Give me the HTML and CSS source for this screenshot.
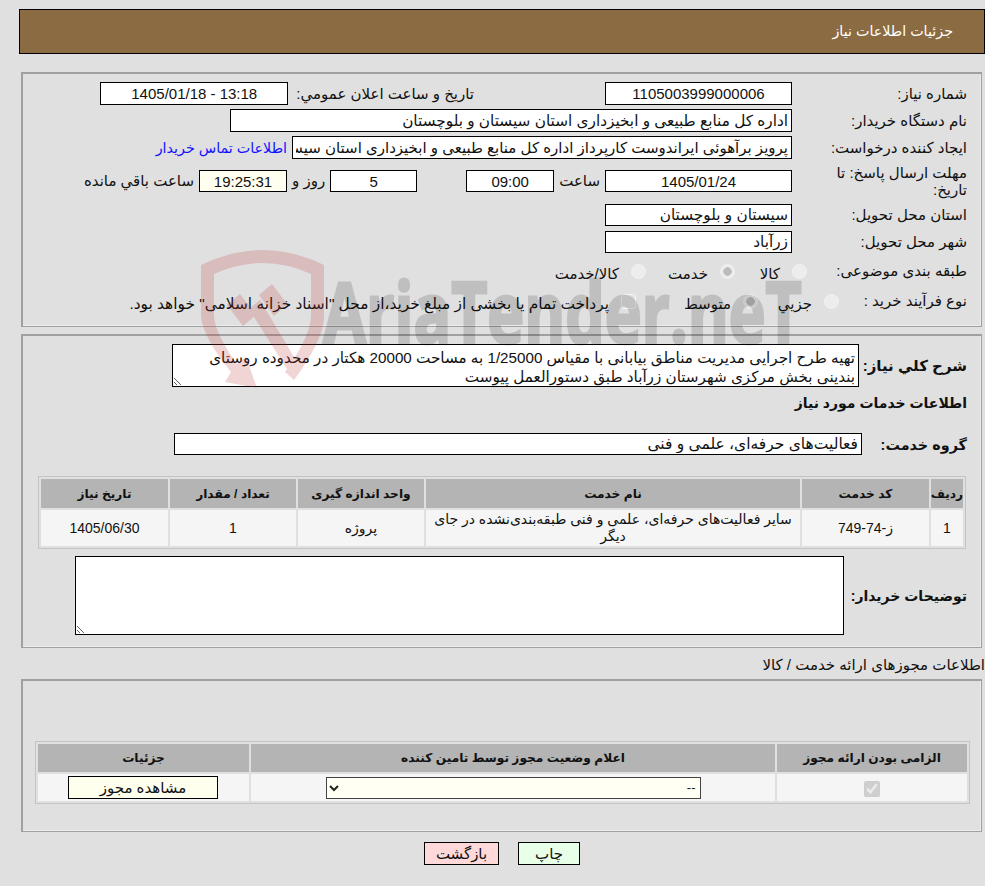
FILE: index.html
```html
<!DOCTYPE html>
<html lang="fa" dir="rtl">
<head>
<meta charset="utf-8">
<title>جزئیات اطلاعات نیاز</title>
<link rel="stylesheet" href="styles.css">
</head>
<body>
<header class="title-bar">جزئیات اطلاعات نیاز</header>

<section class="panel panel-main">
  <div class="row">
    <label class="label">شماره نیاز:</label>
    <input class="field w-186 center" value="1105003999000006" readonly>
    <span class="text gap-131">تاریخ و ساعت اعلان عمومي:</span>
    <input class="field w-187 center ltr gap-3" value="1405/01/18 - 13:18" readonly>
  </div>
  <div class="row">
    <label class="label">نام دستگاه خریدار:</label>
    <input class="field w-561" value="اداره کل منابع طبیعی و ابخیزداری استان سیستان و بلوچستان" readonly>
  </div>
  <div class="row">
    <label class="label">ایجاد کننده درخواست:</label>
    <input class="field w-499 narrow-fa" value="پرویز برآهوئی ایراندوست کارپرداز اداره کل منابع طبیعی و ابخیزداری استان سیستان و بلوچستان" readonly>
    <a class="link" href="#">اطلاعات تماس خریدار</a>
  </div>
  <div class="row row-deadline">
    <label class="label label-wrap">مهلت ارسال پاسخ: تا تاریخ:</label>
    <input class="field short w-186 center ltr" value="1405/01/24" readonly>
    <span class="text">ساعت</span>
    <input class="field short w-87 center" value="09:00" readonly>
    <input class="field short w-86 center gap-49" value="5" readonly>
    <span class="text">روز و</span>
    <input class="field short w-87 center tint" value="19:25:31" readonly>
    <span class="text">ساعت باقي مانده</span>
  </div>
  <div class="row">
    <label class="label">استان محل تحویل:</label>
    <input class="field short w-186" value="سیستان و بلوچستان" readonly>
  </div>
  <div class="row">
    <label class="label">شهر محل تحویل:</label>
    <input class="field short w-186" value="زرآباد" readonly>
  </div>
  <div class="row row-choice row-first-choice">
    <label class="label">طبقه بندی موضوعی:</label>
    <div class="choices first">
      <span class="choice c-goods"><input type="radio" class="radio" disabled><span>کالا</span></span>
      <span class="choice c-service"><input type="radio" class="radio" checked disabled><span>خدمت</span></span>
      <span class="choice"><input type="radio" class="radio" disabled><span>کالا/خدمت</span></span>
    </div>
  </div>
  <div class="row row-choice">
    <label class="label">نوع فرآیند خرید :</label>
    <div class="choices second">
      <span class="choice c-small"><input type="radio" class="radio" disabled><span>جزیي</span></span>
      <span class="choice c-mid"><input type="radio" class="radio" checked disabled><span>متوسط</span></span>
      <span class="choice treasury"><input type="checkbox" class="box" disabled><span>پرداخت تمام یا بخشی از مبلغ خرید،از محل "اسناد خزانه اسلامی" خواهد بود.</span></span>
    </div>
  </div>
</section>

<section class="panel panel-need">
  <div class="row-desc">
    <label class="label-strong l-desc">شرح کلي نیاز:</label>
    <textarea class="area area-desc" readonly>تهیه طرح اجرایی مدیریت مناطق بیابانی با مقیاس 1/25000 به مساحت 20000 هکتار در محدوده روستای بندینی بخش مرکزی شهرستان زرآباد طبق دستورالعمل پیوست</textarea>
  </div>
  <h2 class="heading">اطلاعات خدمات مورد نیاز</h2>
  <div class="row-group">
    <label class="label-strong l-group">گروه خدمت:</label>
    <input class="field short w-687 wide-fa" value="فعالیت‌های حرفه‌ای، علمی و فنی" readonly>
  </div>
  <table class="grid grid-services">
    <colgroup><col class="c1"><col class="c2"><col class="c3"><col class="c4"><col class="c5"><col class="c6"></colgroup>
    <thead>
      <tr><th>ردیف</th><th>کد خدمت</th><th>نام خدمت</th><th>واحد اندازه گیری</th><th>تعداد / مقدار</th><th>تاریخ نیاز</th></tr>
    </thead>
    <tbody>
      <tr><td>1</td><td>ز-74-749</td><td>سایر فعالیت‌های حرفه‌ای، علمی و فنی طبقه‌بندی‌نشده در جای دیگر</td><td>پروژه</td><td>1</td><td>1405/06/30</td></tr>
    </tbody>
  </table>
  <div class="row-notes">
    <label class="label-strong l-notes">توضیحات خریدار:</label>
    <textarea class="area area-notes" readonly></textarea>
  </div>
</section>

<p class="license-title">اطلاعات مجوزهای ارائه خدمت / کالا</p>

<section class="panel panel-license">
  <table class="grid grid-license">
    <colgroup><col class="l1"><col class="l2"><col class="l3"></colgroup>
    <thead>
      <tr><th>الزامی بودن ارائه مجوز</th><th>اعلام وضعیت مجوز توسط تامین کننده</th><th>جزئیات</th></tr>
    </thead>
    <tbody>
      <tr>
        <td><input type="checkbox" class="req" checked disabled></td>
        <td><select class="status"><option>--</option></select></td>
        <td><button class="btn view" type="button">مشاهده مجوز</button></td>
      </tr>
    </tbody>
  </table>
</section>

<div class="actions">
  <button class="btn print" type="button">چاپ</button>
  <button class="btn back" type="button">بازگشت</button>
</div>

<div class="mark" aria-hidden="true">
  <svg class="mark-logo" viewBox="0 0 140 150" width="140" height="150">
    <g class="mark-red">
      <path fill-rule="evenodd" d="M10 18 Q72 -12 133 18 L133 72 Q131 95 103 133 L94 125 Q119 90 120 70 L120 27 Q72 5 23 27 L23 70 Q25 88 46 117 L55 110 L66 141 L34 135 L40 125 Q13 92 10 70 Z"/>
      <path d="M36 58 L49 47 L65 68 L52 79 Z"/>
      <path d="M68 48 L81 37 L96 57 L83 69 Z"/>
      <path d="M58 62 L69 53 L103 110 L103 133 Z"/>
    </g>
  </svg>
  <div class="mark-text">AriaTender.neT</div>
</div>
</body>
</html>
```
FILE: styles.css
```css
* { box-sizing: border-box; }
html, body { margin: 0; padding: 0; }
body {
  position: relative;
  width: 985px;
  height: 886px;
  overflow: hidden;
  background: #e0e0e0;
  color: #111;
  font: 15px/18px "Liberation Sans", "DejaVu Sans", sans-serif;
  padding-top: 9px;
}
.title-bar {
  margin-right: 0;
  margin-left: 19px;
  width: 966px;
  height: 45px;
  background: #8b6b42;
  border: 1px solid #000;
  color: #fff;
  font-size: 14.3px;
  line-height: 43px;
  padding-right: 31px;
}
.panel {
  width: 961px;
  margin-right: 3px;
  margin-left: 21px;
  border: 1px solid #a0a0a0;
  border-top-width: 2px;
  border-left-width: 2px;
  box-shadow: inset -1px -1px 0 #ececec;
}
.panel-main { margin-top: 18px; height: 255px; padding-top: 6px; }
.panel-need { margin-top: 7px; height: 314px; padding-top: 8px; position: relative; }
.panel-license { height: 153px; padding: 60px 11px 0 0; }

.row { display: flex; align-items: center; height: 27px; gap: 5px; }
.row-deadline { height: 40px; }
.row-choice { height: 30px; }
.row-first-choice { margin-top: 1px; }
.label { width: 184px; flex: none; padding: 0 14px 0 0; }
.label-wrap { line-height: 17px; padding-left: 14px; }
.text { white-space: nowrap; }
.link { color: #11f; text-decoration: none; white-space: nowrap; font-size: 14.3px; }
.gap-131 { margin-right: 126px; }
.gap-49 { margin-right: 44px; }
.gap-3 { margin-right: 3px; }

.field {
  height: 23px;
  border: 1px solid #000;
  background: #fff;
  color: #111;
  font: inherit;
  font-size: 15.3px;
  padding: 0 3px;
  border-radius: 0;
  outline: 0;
  flex: none;
}
.field.short { height: 22px; }
.center { text-align: center; font-size: 15px; }
.wide-fa { font-size: 15.5px; }
.narrow-fa { font-size: 15px; }
.ltr { direction: ltr; }
.tint { background: #fffff0; }
.w-186 { width: 187px; }
.w-187 { width: 188px; }
.w-561 { width: 562px; }
.w-499 { width: 500px; }
.w-87 { width: 88px; }
.w-86 { width: 87px; }
.w-687 { width: 688px; }

.choices { display: flex; align-items: center; }
.choices.first { margin-right: -15px; }
.choices.second { margin-right: -47px; }
.choice { display: inline-flex; align-items: center; gap: 12px; white-space: nowrap; }
.c-goods { width: 72px; }
.c-service { width: 89px; }
.c-small { width: 81px; }
.c-mid { width: 122px; }
.treasury { font-size: 15.4px; }
.radio, .box {
  appearance: none;
  width: 15px;
  height: 15px;
  margin: 0;
  background: #ededed;
  border: 1px solid #f2f2f2;
  border-radius: 50%;
  flex: none;
}
.box { border-radius: 3px; border-color: #f6f6f6; background: #e2e2e2; }
.radio:checked { background: radial-gradient(circle, #bcbcbc 0 4px, #ededed 4.5px); }
.choice > span { position: relative; top: 3px; }

.row-desc { display: flex; align-items: center; height: 42px; }
.label-strong { font-weight: bold; white-space: nowrap; }
.l-desc { width: 122px; flex: none; padding: 2px 14px 0 0; }
.area {
  display: block;
  border: 1px solid #000;
  background: #fff;
  color: #111;
  font: inherit;
  padding: 3px 3px 0;
  border-radius: 0;
  outline: 0;
  overflow: hidden;
}
.area-desc { width: 687px; height: 43px; line-height: 19px; font-size: 15.2px; }
.heading { margin: 7px 14px 0 0; font-size: 14px; line-height: 20px; font-weight: bold; height: 20px; }
.row-group { display: flex; align-items: center; margin-top: 20px; height: 22px; }
.l-group { width: 119px; flex: none; padding: 2px 14px 0 0; font-size: 14.4px; }

.grid {
  border-collapse: separate;
  border-spacing: 2px;
  border: 1px solid #c4c4c4;
  table-layout: fixed;
}
.grid th {
  background: #b4b4b4;
  font-size: 12.2px;
  font-weight: bold;
  height: 29px;
  padding: 0;
}
.grid td {
  background: #f5f5f5;
  text-align: center;
  padding: 0 2px;
  line-height: 17px;
}
.grid-services { width: 928px; margin: 21px 15px 0 0; }
.grid-services td { height: 36px; font-size: 14px; }
.c1 { width: 32px; } .c2 { width: 127px; } .c3 { width: 374px; }
.c4 { width: 126px; } .c5 { width: 126px; } .c6 { width: 127px; }
.row-notes { display: flex; align-items: center; margin-top: 7px; }
.l-notes { width: 137px; flex: none; padding-right: 14px; font-size: 14px; }
.area-notes { width: 769px; height: 79px; }

.license-title { margin: 8px 0 0 -20px; height: 23px; line-height: 18px; white-space: nowrap; font-size: 15px; }
.grid-license { width: 935px; }
.grid-license th { height: 28px; }
.grid-license td { height: 27px; }
.l1 { width: 190px; } .l2 { width: 524px; } .l3 { width: 211px; }
.req { width: 16px; height: 16px; margin: 0; vertical-align: middle; }
.status {
  display: block;
  margin: 0 auto;
  width: 375px;
  height: 22px;
  font: 13px "Liberation Sans", sans-serif;
  background: #fffff4;
  border: 1px solid #444;
  border-radius: 0;
  color: #222;
}
.btn {
  border: 1px solid #000;
  border-radius: 0;
  font: inherit;
  color: #111;
  padding: 0;
  height: 23px;
}
.view { width: 150px; background: #ffffee; display: block; margin: 0 auto 0 28px; }
.actions { display: flex; justify-content: center; gap: 19px; margin-top: 10px; padding-left: 19px; }
.print { width: 62px; background: #e8ffe8; }
.back { width: 75px; background: #ffd9d9; }

.mark {
  position: absolute;
  top: 0; left: 0;
  width: 985px; height: 886px;
  pointer-events: none;
}
.mark-logo { position: absolute; left: 191px; top: 247px; }
.mark-red { fill: #be3232; opacity: .2; }
.mark-text {
  position: absolute;
  left: 323px;
  top: 269px;
  direction: ltr;
  color: #000;
  -webkit-text-stroke: 3px #000;
  opacity: .14;
  font: bold 84px/84px "Open Sans", sans-serif;
  transform: scaleX(.743);
  transform-origin: left top;
  white-space: nowrap;
}
```
